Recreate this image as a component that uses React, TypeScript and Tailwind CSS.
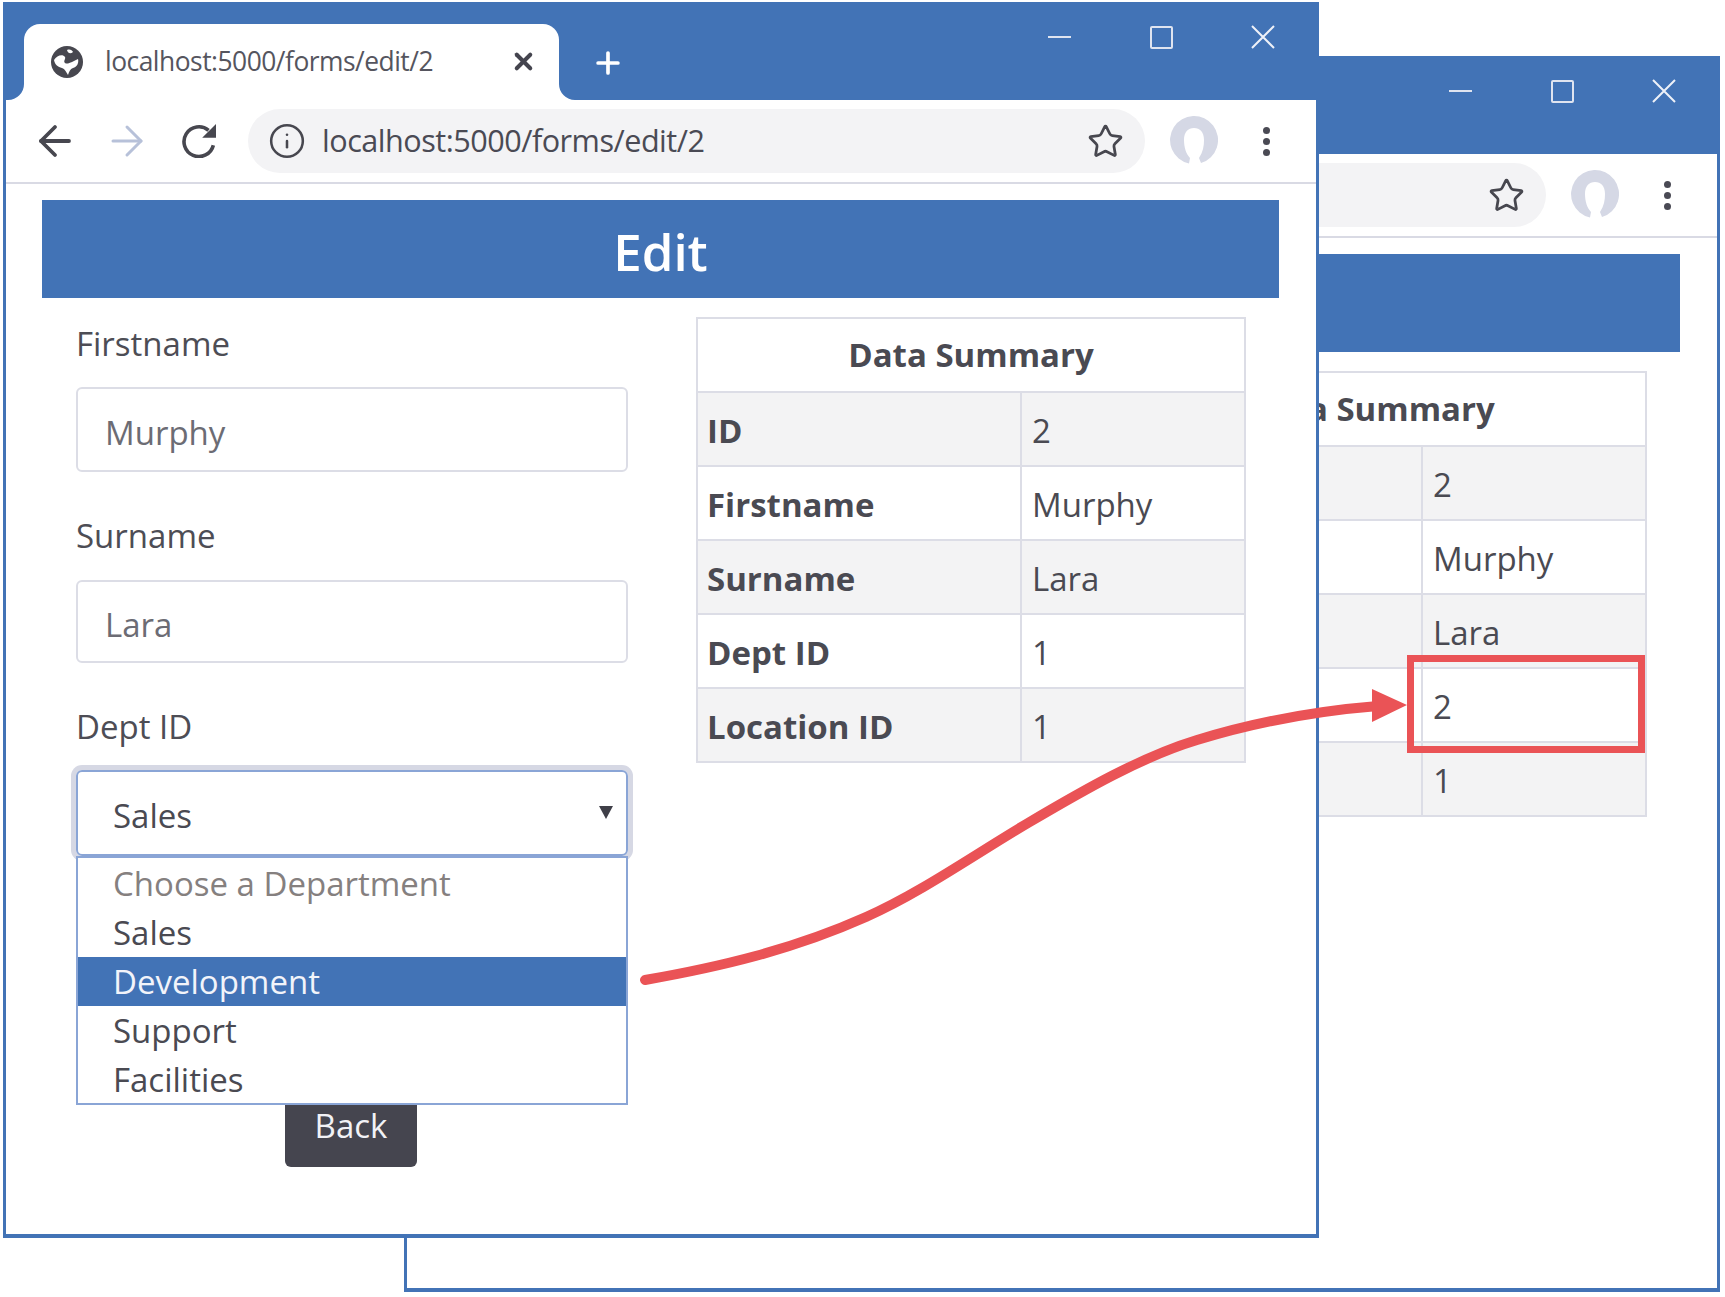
import { ArrowLeft, ArrowRight, Info, Star, X, Plus } from "lucide-react";

const rows = ["ID", "Firstname", "Surname", "Dept ID", "Location ID"];

function Globe() {
  return (
    <svg width="32" height="32" viewBox="0 0 32 32" className="shrink-0">
      <circle cx="16" cy="16" r="16" fill="#47474f" />
      <path d="M3 14c3-5 9-6 11-3 1 2-2 4 0 6 3 2 8-2 13-4 1 4-1 8-5 9-3 1-4 4-5 7-2-3-3-6-6-7-4-1-7-3-8-8z" fill="#fff" />
      <path d="M16 4c3-1 5 0 6 2-2 2-5 2-6-2z" fill="#fff" />
    </svg>
  );
}

function Reload() {
  return (
    <svg width="34" height="34" viewBox="0 0 32 32" fill="none">
      <path d="M29.5 20A14 14 0 1 1 25 6" stroke="#47474f" strokeWidth="3.4" />
      <path d="M32 0V13H19Z" fill="#47474f" />
    </svg>
  );
}

function Avatar() {
  return (
    <svg width="48" height="50" viewBox="0 0 48 50" className="shrink-0 ml-[25px]">
      <path
        fill="#d5d8e5"
        d="M19 47.5A24 24 0 1 1 31 47L29 42C33 36 34 30 34 24C34 16 30 12 24 12C18 12 14 16 14 24C14 31 16 38 20 42Z"
      />
    </svg>
  );
}

function Browser({ dept, pos, open }: { dept: string; pos: string; open: boolean }) {
  return (
    <div className={`absolute ${pos} w-[1316px] h-[1236px] flex flex-col bg-white border-x-[3px] border-b-4 border-[#4273b6]`}>
      <div className="h-[98px] shrink-0 bg-[#4273b6] flex items-start pl-[18px]">
        <div className="relative mt-[22px] h-[76px] w-[535px] bg-white rounded-t-[16px] flex items-center pl-[27px] text-[#55555e] text-[26.4px]">
          <svg width="16" height="16" viewBox="0 0 16 16" className="absolute -left-[16px] bottom-0">
            <path d="M0 16A16 16 0 0 0 16 0V16Z" fill="#fff" />
          </svg>
          <svg width="16" height="16" viewBox="0 0 16 16" className="absolute -right-[16px] bottom-0">
            <path d="M16 16A16 16 0 0 1 0 0V16Z" fill="#fff" />
          </svg>
          <Globe />
          <span className="ml-[22px] whitespace-nowrap tracking-[-0.5px]">localhost:5000/forms/edit/2</span>
          <X size={27} strokeWidth={3.6} className="absolute left-[486px] top-[24px] text-[#44444e]" />
        </div>
        <Plus size={34} strokeWidth={2.6} className="mt-[44px] ml-[32px] text-white" />
        <div className="ml-auto flex text-white mr-[2px]">
          <div className="w-[102px] h-[70px] flex items-center justify-center">
            <div className="w-[23px] h-[2px] bg-[#dfe4f0]" />
          </div>
          <div className="w-[102px] h-[70px] flex items-center justify-center">
            <div className="w-[23px] h-[23px] border-2 border-[#dfe4f0] rounded-[2px]" />
          </div>
          <div className="w-[102px] h-[70px] flex items-center justify-center">
            <svg width="24" height="24" viewBox="0 0 24 24" stroke="#eef1f8" strokeWidth="2" fill="none">
              <path d="M1 1L23 23M23 1L1 23" />
            </svg>
          </div>
        </div>
      </div>
      <div className="h-[84px] shrink-0 flex items-center pl-[13px] border-b-2 border-[#d9dae4]">
        <div className="w-[72px] flex justify-center"><ArrowLeft size={48} strokeWidth={1.9} className="text-[#47474f]" /></div>
        <div className="w-[72px] flex justify-center"><ArrowRight size={48} strokeWidth={1.5} className="text-[#b7c1d9]" /></div>
        <div className="w-[72px] flex justify-center"><Reload /></div>
        <div className="ml-[13px] w-[897px] h-[64px] rounded-full bg-[#f3f3f5] flex items-center pl-[20px] pr-[21px] text-[#4a4a54] text-[30.6px]">
          <Info size={38} strokeWidth={1.6} className="text-[#47474f] shrink-0" />
          <span className="ml-[16px] whitespace-nowrap tracking-[-0.5px]">localhost:5000/forms/edit/2</span>
          <Star size={37} strokeWidth={1.8} className="ml-auto text-[#47474f]" />
        </div>
        <Avatar />
        <div className="ml-[36px] w-[24px] flex flex-col items-center gap-[4px]">
          <div className="w-[7px] h-[7px] rounded-full bg-[#4a4a54]" />
          <div className="w-[7px] h-[7px] rounded-full bg-[#4a4a54]" />
          <div className="w-[7px] h-[7px] rounded-full bg-[#4a4a54]" />
        </div>
      </div>
      <div className="flex-1 pt-[16px] text-[#4a4a52]">
        <div className="ml-[36px] mr-[37px] h-[98px] pt-[5px] bg-[#4273b6] text-white text-[51px] font-semibold flex items-center justify-center">Edit</div>
        <div className="flex justify-between px-[70px] text-[33px]">
          <div className="w-[552px] pt-[22px]">
            <div className="h-[48px] leading-[48px] text-[#4d4d55]">Firstname</div>
            <div className="mt-[19px] h-[85px] rounded-[6px] border-2 border-[#dcdde6] flex items-center pl-[27px] pt-[6px] text-[#6c6c74]">Murphy</div>
            <div className="mt-[40px] h-[48px] leading-[48px] text-[#4d4d55]">Surname</div>
            <div className="mt-[20px] h-[83px] rounded-[6px] border-2 border-[#dcdde6] flex items-center pl-[27px] pt-[6px] text-[#6c6c74]">Lara</div>
            <div className="mt-[40px] h-[48px] leading-[48px] text-[#4d4d55]">Dept ID</div>
            <div className="relative mt-[19px] h-[86px]">
              <div className="h-full rounded-[6px] border-2 border-[#8aa5d6] shadow-[0_0_0_5px_#d6d8e4] flex items-center pl-[35px] pt-[6px]">Sales</div>
              <svg width="14" height="13" viewBox="0 0 14 13" className="absolute right-[15px] top-[36px]">
                <path d="M0 0H14L7 13Z" fill="#3f3f48" />
              </svg>
              {open && (
                <div className="absolute z-10 left-0 right-0 top-[86px] h-[249px] bg-white border-2 border-[#8aa5d6] flex flex-col">
                  <div className="h-[49px] shrink-0 pl-[35px] flex items-center mt-[1px] text-[#85807f]">Choose a Department</div>
                  <div className="h-[49px] shrink-0 pl-[35px] flex items-center">Sales</div>
                  <div className="h-[49px] shrink-0 pl-[35px] flex items-center bg-[#4273b6] text-[#f2f4fa]">Development</div>
                  <div className="h-[49px] shrink-0 pl-[35px] flex items-center">Support</div>
                  <div className="h-[49px] shrink-0 pl-[35px] flex items-center">Facilities</div>
                </div>
              )}
            </div>
            <button className="block mx-auto mt-[228px] w-[132px] h-[83px] rounded-[6px] bg-[#45454f] text-[#f2f2f6] pt-[1px] -translate-x-[1px]">Back</button>
          </div>
          <table className="w-[550px] h-[443px] mt-[19px] border-collapse border-2 border-[#dcdde6] table-fixed self-start">
            <colgroup>
              <col className="w-[324px]" />
              <col />
            </colgroup>
            <thead>
              <tr className="h-[74px]">
                <th colSpan={2} className="border-2 border-[#dcdde6] font-bold text-center">Data Summary</th>
              </tr>
            </thead>
            <tbody>
              {rows.map((r, i) => (
                <tr key={r} className={`h-[74px] ${i % 2 === 0 ? "bg-[#f3f3f4]" : "bg-white"}`}>
                  <td className="border-2 border-[#dcdde6] pl-[9px] pt-[3px] font-bold">{r}</td>
                  <td className="border-2 border-[#dcdde6] pl-[10px] pt-[3px]">
                    {["2", "Murphy", "Lara", dept, "1"][i]}
                  </td>
                </tr>
              ))}
            </tbody>
          </table>
        </div>
      </div>
    </div>
  );
}

export default function App() {
  return (
    <div className="relative w-[1725px] h-[1297px] bg-white overflow-hidden font-['Open_Sans',sans-serif]">
      <Browser dept="2" pos="left-[404px] top-[56px]" open={false} />
      <Browser dept="1" pos="left-[3px] top-[2px]" open />
      <div className="absolute left-[1407px] top-[655px] w-[238px] h-[98px] border-[7px] border-[#ea5356]" />
      <svg width="1725" height="1297" viewBox="0 0 1725 1297" className="absolute left-0 top-0 pointer-events-none">
        <path
          d="M645 980C719 967 792 950 866 917C920 893 974 855 1028 823C1084 790 1141 757 1197 740C1256 722 1315 711 1378 706"
          fill="none"
          stroke="#ea5356"
          strokeWidth="10"
          strokeLinecap="round"
        />
        <path d="M1372 689L1407 705L1372 722Z" fill="#ea5356" />
        <path
          d="M426 998V1032L435 1024L441 1037L447 1034L442 1022L452 1022Z"
          fill="#fff"
          stroke="#44444e"
          strokeWidth="3.4"
          strokeLinejoin="round"
        />
      </svg>
    </div>
  );
}
